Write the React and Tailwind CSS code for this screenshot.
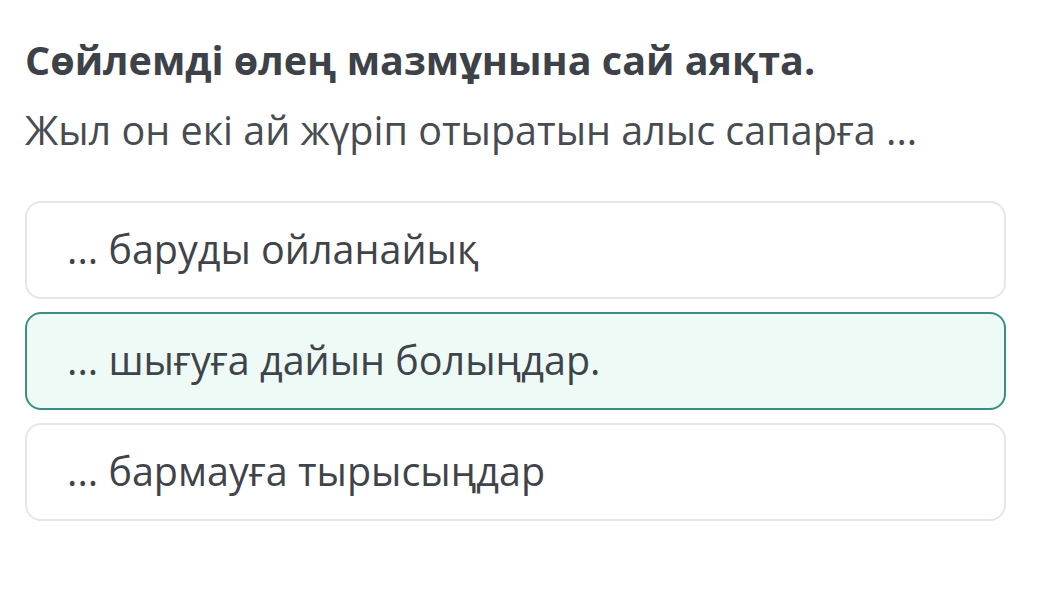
export default function App() {
  const options = [
    { text: "... баруды ойланайық", selected: false },
    { text: "... шығуға дайын болыңдар.", selected: true },
    { text: "... бармауға тырысыңдар", selected: false },
  ];

  return (
    <div
      className="w-[1043px] h-[605px] bg-white pl-[25px] pt-[34px]"
      style={{ fontFamily: '"Open Sans", "Noto Sans", sans-serif' }}
    >
      <h1 className="text-[39.5px] leading-[52px] font-bold text-[#3d4248]">
        Сөйлемді өлең мазмұнына сай аяқта.
      </h1>
      <p className="mt-[18px] text-[39.5px] leading-[52px] text-[#474c52]">
        Жыл он екі ай жүріп отыратын алыс сапарға ...
      </p>
      <div className="mt-[45px] w-[981px] flex flex-col gap-[13px]">
        {options.map((opt, i) => (
          <div
            key={i}
            className={`h-[98px] rounded-[16px] border-2 flex items-center pl-[40px] text-[39.5px] text-[#3f444a] ${
              opt.selected ? "bg-[#eefaf6] border-[#3a8f80]" : "bg-white border-[#e6e6e6]"
            }`}
          >
            {opt.text}
          </div>
        ))}
      </div>
    </div>
  );
}
